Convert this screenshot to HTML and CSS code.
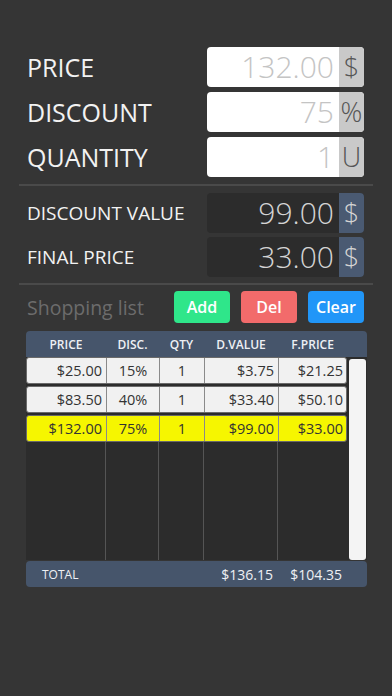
FILE: index.html
```html
<!DOCTYPE html>
<html lang="en">

<head>
    <meta charset="UTF-8" />
    <meta name="viewport" content="width=device-width, initial-scale=1.0" />
    <title>Discount Calculator</title>
    <link rel="stylesheet" href="styles.css">
</head>

<body>
    <div class="app">
        <!-- inputs -->
        <div class="group inputs">
            <div class="field">
                <span class="label">PRICE</span>
                <div class="box">
                    <span class="value">132.00</span>
                    <span class="unit">$</span>
                </div>
            </div>
            <div class="field">
                <span class="label">DISCOUNT</span>
                <div class="box">
                    <span class="value">75</span>
                    <span class="unit">%</span>
                </div>
            </div>
            <div class="field">
                <span class="label">QUANTITY</span>
                <div class="box">
                    <span class="value">1</span>
                    <span class="unit">U</span>
                </div>
            </div>
        </div>
        <div class="line"></div>

        <!-- results -->
        <div class="group results">
            <div class="field">
                <span class="label">DISCOUNT VALUE</span>
                <div class="box">
                    <span class="value">99.00</span>
                    <span class="unit">$</span>
                </div>
            </div>
            <div class="field">
                <span class="label">FINAL PRICE</span>
                <div class="box">
                    <span class="value">33.00</span>
                    <span class="unit">$</span>
                </div>
            </div>
        </div>
        <div class="line line2"></div>

        <!-- list -->
        <div class="list-bar">
            <span class="list-title">Shopping list</span>
            <div class="btns">
                <button class="btn add">Add</button>
                <button class="btn del">Del</button>
                <button class="btn clear">Clear</button>
            </div>
        </div>

        <div class="table">
            <div class="thead">
                <span>PRICE</span>
                <span>DISC.</span>
                <span>QTY</span>
                <span>D.VALUE</span>
                <span>F.PRICE</span>
            </div>
            <div class="tbody">
                <div class="rows">
                    <div class="row">
                        <span class="r">$25.00</span>
                        <span class="c">15%</span>
                        <span class="c">1</span>
                        <span class="r">$3.75</span>
                        <span class="r">$21.25</span>
                    </div>
                    <div class="row">
                        <span class="r">$83.50</span>
                        <span class="c">40%</span>
                        <span class="c">1</span>
                        <span class="r">$33.40</span>
                        <span class="r">$50.10</span>
                    </div>
                    <div class="row sel">
                        <span class="r">$132.00</span>
                        <span class="c">75%</span>
                        <span class="c">1</span>
                        <span class="r">$99.00</span>
                        <span class="r">$33.00</span>
                    </div>
                    <div class="filler">
                        <span></span><span></span><span></span><span></span><span></span>
                    </div>
                </div>
                <div class="scroll"></div>
            </div>
            <div class="total">
                <span class="total-label">TOTAL</span>
                <span class="total-d">$136.15</span>
                <span class="total-f">$104.35</span>
            </div>
        </div>
    </div>
</body>

</html>
```

FILE: styles.css
```css
* {
    margin: 0;
    padding: 0;
    box-sizing: border-box;
}

body {
    background: #353535;
    font-family: "Open Sans", "Noto Sans", sans-serif;
    color: #f2f2f2;
}

.app {
    width: 392px;
    height: 696px;
    padding-top: 47px;
}

.group {
    display: flex;
    flex-direction: column;
    gap: 5px;
    padding: 0 28px 0 27px;
}

.results {
    gap: 4px;
}

.field {
    display: flex;
    align-items: center;
    justify-content: space-between;
    height: 40px;
}

.label {
    font-size: 25px;
}

.results .label {
    font-size: 19px;
}

.box {
    display: flex;
    width: 157px;
    height: 40px;
    border-radius: 4px;
    overflow: hidden;
    background: #fff;
}

.box .value {
    flex: 1;
    text-align: right;
    font-size: 30px;
    font-weight: 300;
    line-height: 40px;
    color: #c4c4c4;
    padding-right: 5px;
}

.box .unit {
    width: 25px;
    text-align: center;
    font-size: 27px;
    font-weight: 300;
    line-height: 40px;
    background: #c9c9c9;
    color: #555;
}

.results .box {
    background: #2c2c2c;
}

.results .box .value {
    color: #d4d4d4;
}

.results .box .unit {
    background: #4a5a72;
    color: #d4d4d4;
}

.line {
    height: 2px;
    margin: 7px 19px;
    background: #4a4a4a;
}

.line2 {
    margin: 6px 19px;
}

.list-bar {
    display: flex;
    align-items: center;
    justify-content: space-between;
    padding: 0 28px 0 27px;
}

.list-title {
    font-size: 19.5px;
    color: #6c6c6c;
}

.btns {
    display: flex;
    gap: 11px;
}

.btn {
    width: 56px;
    height: 32px;
    border: none;
    border-radius: 4px;
    color: #fff;
    font: 600 16px "Open Sans", "Noto Sans", sans-serif;
}

.add {
    background: #2fe68a;
}

.del {
    background: #f26b6b;
}

.clear {
    background: #2196f8;
}

.table {
    width: 341px;
    margin: 8px 0 0 26px;
}

.thead {
    display: grid;
    grid-template-columns: 80px 53px 45px 74px 69px 20px;
    height: 26px;
    align-items: center;
    background: #46556b;
    border-radius: 4px 4px 0 0;
    font-size: 12px;
    font-weight: 600;
    color: #eef0f4;
}

.thead span {
    text-align: center;
}

.tbody {
    display: flex;
    height: 203px;
    background: #2c2c2c;
}

.rows {
    width: 321px;
    display: flex;
    flex-direction: column;
    gap: 2px;
}

.row {
    display: grid;
    grid-template-columns: 80px 53px 45px 74px 68px;
    height: 27px;
    background: #f1f1f1;
    border: 1px solid #6a6a6a;
    border-radius: 3px;
    font-size: 14.5px;
    color: #333;
    align-items: center;
}

.row span {
    height: 100%;
    line-height: 25px;
    border-right: 1px solid #8a8a8a;
}

.row span:last-child {
    border-right: none;
}

.row .r {
    text-align: right;
    padding-right: 4px;
}

.row .c {
    text-align: center;
}

.row.sel {
    background: #f6f600;
}

.filler {
    flex: 1;
    display: grid;
    grid-template-columns: 80px 53px 45px 74px 68px;
    margin-top: -2px;
}

.filler span {
    border-right: 1px solid #555;
}

.filler span:last-child {
    border-right: none;
}

.scroll {
    width: 17px;
    margin: 2px 0 0 2px;
    background: #f4f4f4;
    border-radius: 3px;
}

.total {
    display: flex;
    align-items: center;
    height: 26px;
    margin-top: 1px;
    background: #46556b;
    border-radius: 4px;
    font-size: 14px;
    color: #eef0f4;
}

.total-label {
    font-size: 12px;
    margin-left: 16px;
    width: 100px;
}

.total-d {
    width: 131px;
    text-align: right;
}

.total-f {
    width: 69px;
    text-align: right;
}
```
